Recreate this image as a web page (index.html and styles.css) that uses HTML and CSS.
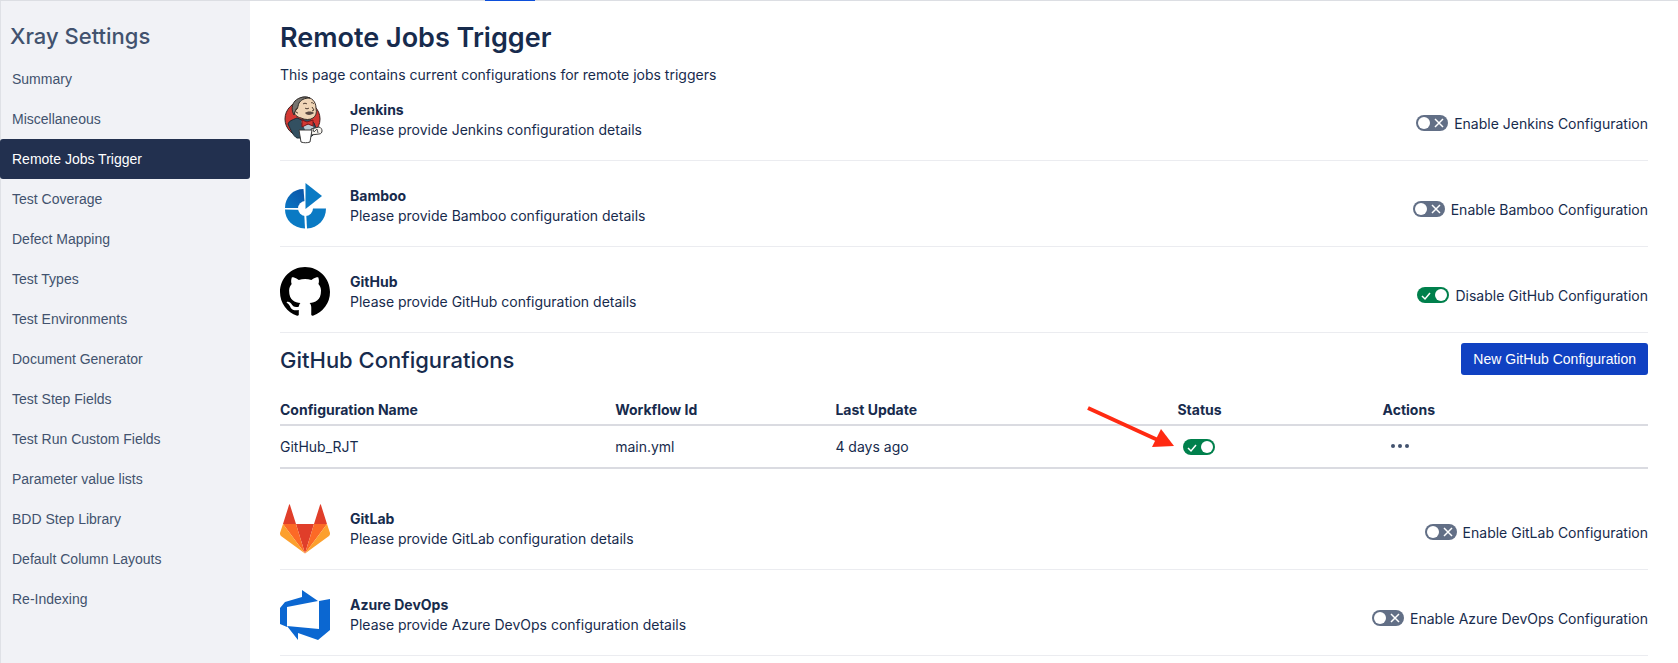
FILE: index.html
```html
<!DOCTYPE html>
<html lang="en">
<head>
  <meta charset="UTF-8">
  <meta name="viewport" content="width=device-width, initial-scale=1">
  <title>Remote Jobs Trigger - Xray Settings</title>
  <link rel="stylesheet" href="styles.css">
</head>
<body>
  <div class="top-line"><span class="top-tab"></span></div>
  <div class="layout">
    <nav class="sidebar">
      <h2>Xray Settings</h2>
      <a href="#">Summary</a>
      <a href="#">Miscellaneous</a>
      <a href="#" class="active">Remote Jobs Trigger</a>
      <a href="#">Test Coverage</a>
      <a href="#">Defect Mapping</a>
      <a href="#">Test Types</a>
      <a href="#">Test Environments</a>
      <a href="#">Document Generator</a>
      <a href="#">Test Step Fields</a>
      <a href="#">Test Run Custom Fields</a>
      <a href="#">Parameter value lists</a>
      <a href="#">BDD Step Library</a>
      <a href="#">Default Column Layouts</a>
      <a href="#">Re-Indexing</a>
    </nav>

    <main class="content">
      <h1>Remote Jobs Trigger</h1>
      <p class="intro">This page contains current configurations for remote jobs triggers</p>

      <section class="provider first">
        <svg class="logo" viewBox="0 0 50 50">
          <circle cx="22.500" cy="24" r="17.500" fill="#d33833" stroke="#3a2020" stroke-width="1"/>
          <path d="M8 29c1-3 4-4 9-6l5 2 8-1 4 4 3 8-5 5-7 2H17c-4-2-6-8-9-14z" fill="#335061" stroke="#1b2a33" stroke-width="1"/>
          <path d="M14 15c0-8 5-13 11-13 7 0 11 5 11 11 1 5 0 8-3 10-3 2-8 2-12 0-4-1-7-3-7-8z" fill="#f0d6b7" stroke="#3a2f2a" stroke-width="1"/>
          <path d="M14 20c-3-5-2-11 1-14 4-4 10-5 15-3-6 0-9 2-11 5-1 2-1 5-2 6-2 1-2 3-3 6z" fill="#77746f" stroke="#2f2b28" stroke-width="1"/>
          <path d="M17 13c-2 1-2 5 1 5M23 9c1-1 3-1 4 0M31 8c1-1 2 0 3 1M25 13c1 1 3 1 4 0M32 12l2 3-2 1" fill="none" stroke="#4d3b30" stroke-width="1"/>
          <path d="M25 18c2-2 7-2 9 0-2 2-7 3-9 0z" fill="#5b4a43"/>
          <path d="M21 26l6 4 5-3 2 8-8 2z" fill="#b9cad4"/>
          <path d="M22 25l5 2 6-2v6l-5-2-6 3z" fill="#d33833" stroke="#7c1518" stroke-width="1"/>
          <path d="M31 34l8-2c4 1 4 7 0 7l-8 1z" fill="#f6f3ee" stroke="#3a3a3a" stroke-width="1"/>
          <path d="M33 34l1 3 3-3 1 4" fill="none" stroke="#555" stroke-width="1"/>
          <path d="M19 35h13l-2 12c-3 1-6 1-9 0z" fill="#fff" stroke="#3a3a3a" stroke-width="1"/>
        </svg>
        <div class="info">
          <strong>Jenkins</strong>
          <span>Please provide Jenkins configuration details</span>
        </div>
        <label class="switch-label">
          <span class="toggle">
            <input type="checkbox">
            <svg viewBox="0 0 32 16"><path d="M19 4l8 8M27 4l-8 8"/></svg>
          </span>
          Enable Jenkins Configuration
        </label>
      </section>

      <section class="provider">
        <svg class="logo" viewBox="0 0 50 50">
          <defs>
            <linearGradient id="bambooFade" x1="1" y1="0" x2="0" y2="1">
              <stop offset="0" stop-color="#0b52a5"/>
              <stop offset="1" stop-color="#0a76c4"/>
            </linearGradient>
          </defs>
          <path d="M23.500 8l1.500 19L5 27C5 16 13 8 23.500 8z" fill="url(#bambooFade)"/>
          <path d="M5 28.500l19 .5 1 18.500C13 47 5 39 5 28.500z" fill="#0a7ac4"/>
          <path d="M26 28.500V27.500H46c0 11-8 19.500-19 20z" fill="#0a7ac4"/>
          <circle cx="25.500" cy="27.500" r="7.500" fill="#fff"/>
          <path d="M25.500 2L42 15 25.500 28z" fill="#0a7ac4"/>
        </svg>
        <div class="info">
          <strong>Bamboo</strong>
          <span>Please provide Bamboo configuration details</span>
        </div>
        <label class="switch-label">
          <span class="toggle">
            <input type="checkbox">
            <svg viewBox="0 0 32 16"><path d="M19 4l8 8M27 4l-8 8"/></svg>
          </span>
          Enable Bamboo Configuration
        </label>
      </section>

      <section class="provider">
        <svg class="logo" viewBox="0 0 16 16">
          <path fill-rule="evenodd" d="M8 0C3.580 0 0 3.580 0 8c0 3.540 2.290 6.530 5.470 7.590.4.070.55-.17.55-.38 0-.19-.01-.82-.01-1.490-2.010.37-2.530-.49-2.690-.94-.09-.23-.48-.94-.82-1.130-.28-.15-.68-.52-.01-.53.63-.01 1.080.58 1.230.82.72 1.210 1.870.87 2.330.66.07-.52.28-.87.51-1.070-1.780-.2-3.640-.89-3.640-3.950 0-.87.31-1.590.82-2.150-.08-.2-.36-1.020.08-2.120 0 0 .67-.21 2.200.82.64-.18 1.320-.27 2-.27s1.360.09 2 .27c1.530-1.040 2.200-.82 2.200-.82.44 1.100.16 1.920.08 2.120.51.56.82 1.270.82 2.150 0 3.070-1.870 3.750-3.650 3.950.29.25.54.73.54 1.480 0 1.070-.01 1.930-.01 2.200 0 .21.15.46.55.38A8.010 8.010 0 0 0 16 8c0-4.420-3.580-8-8-8z"/>
        </svg>
        <div class="info">
          <strong>GitHub</strong>
          <span>Please provide GitHub configuration details</span>
        </div>
        <label class="switch-label">
          <span class="toggle">
            <input type="checkbox" checked>
            <svg viewBox="0 0 32 16"><path d="M5 9l3 3 5-6"/></svg>
          </span>
          Disable GitHub Configuration
        </label>
      </section>

      <section class="configs">
        <div class="configs-head">
          <h2>GitHub Configurations</h2>
          <button type="button" class="primary">New GitHub Configuration</button>
        </div>
        <table>
          <thead>
            <tr>
              <th class="col-name">Configuration Name</th>
              <th class="col-workflow">Workflow Id</th>
              <th class="col-update">Last Update</th>
              <th class="col-status">Status</th>
              <th>Actions</th>
            </tr>
          </thead>
          <tbody>
            <tr>
              <td>GitHub_RJT</td>
              <td>main.yml</td>
              <td>4 days ago</td>
              <td>
                <div class="status">
                  <span class="toggle">
                    <input type="checkbox" aria-label="Status" checked>
                    <svg viewBox="0 0 32 16"><path d="M5 9l3 3 5-6"/></svg>
                  </span>
                  <svg class="arrow" viewBox="0 0 88 44">
                    <path d="M1 3l72 33" stroke="#ff2a12" stroke-width="4"/>
                    <path d="M74 24l13 17-22 1z" fill="#ff2a12"/>
                  </svg>
                </div>
              </td>
              <td>
                <button type="button" class="more" aria-label="More actions">
                  <svg viewBox="0 0 18 4"><circle cx="2" cy="2" r="2"/><circle cx="9" cy="2" r="2"/><circle cx="16" cy="2" r="2"/></svg>
                </button>
              </td>
            </tr>
          </tbody>
        </table>
      </section>

      <section class="provider">
        <svg class="logo" viewBox="0 0 50 50">
          <path d="M25 49.500L16 20h18z" fill="#e03e2a"/>
          <path d="M25 49.500L3 20h13zM25 49.500L47 20H34z" fill="#fc6a26"/>
          <path d="M25 49.500L3 20 0 29c0 1 0 2 1 3zM25 49.500L47 20l3 9c0 1 0 2-1 3z" fill="#fca02e"/>
          <path d="M3 20h13L10 1c0-1-1-1-1 0zM47 20H34l6-19c0-1 1-1 1 0z" fill="#e03e2a"/>
        </svg>
        <div class="info">
          <strong>GitLab</strong>
          <span>Please provide GitLab configuration details</span>
        </div>
        <label class="switch-label">
          <span class="toggle">
            <input type="checkbox">
            <svg viewBox="0 0 32 16"><path d="M19 4l8 8M27 4l-8 8"/></svg>
          </span>
          Enable GitLab Configuration
        </label>
      </section>

      <section class="provider">
        <svg class="logo" viewBox="0 0 50 50">
          <path d="M0 18l5-6 17-5V0l16 11L7 17v20l-7-3zM39 11l11-2v31l-12 10-20-7v7L7 36l32 3z" fill="#0b67d1"/>
        </svg>
        <div class="info">
          <strong>Azure DevOps</strong>
          <span>Please provide Azure DevOps configuration details</span>
        </div>
        <label class="switch-label">
          <span class="toggle">
            <input type="checkbox">
            <svg viewBox="0 0 32 16"><path d="M19 4l8 8M27 4l-8 8"/></svg>
          </span>
          Enable Azure DevOps Configuration
        </label>
      </section>
    </main>
  </div>
</body>
</html>
```

FILE: styles.css
```css
* {
  box-sizing: border-box;
}
body {
  margin: 0;
  min-height: 100vh;
  display: flex;
  flex-direction: column;
  font-family: Inter, "Liberation Sans", sans-serif;
  font-size: 14px;
  line-height: 20px;
  color: #172b4d;
  background: #fff;
}
h1, h2, p {
  margin: 0;
}
.top-line {
  height: 1px;
  padding-left: 485px;
  background: #dcdee3;
}
.top-tab {
  display: block;
  width: 50px;
  height: 1px;
  background: #0c4fdb;
}
.layout {
  flex: 1;
  display: flex;
}

/* sidebar */
.sidebar {
  flex: none;
  width: 250px;
  padding-top: 20px;
  background: #f1f2f6;
  box-shadow: inset 1px 0 #dfe1e6;
  font-family: "Liberation Sans", Arial, sans-serif;
}
.sidebar h2 {
  padding: 0 10px 8px;
  font-family: Inter, sans-serif;
  font-size: 22px;
  font-weight: 500;
  line-height: 30px;
  color: #42526e;
}
.sidebar a {
  display: block;
  padding: 10px 12px;
  border-radius: 3px;
  color: #42526e;
  text-decoration: none;
}
.sidebar a.active {
  background: #22304f;
  color: #fff;
}

/* content */
.content {
  flex: 1;
  padding: 20px 30px 0;
}
h1 {
  font-size: 27px;
  font-weight: 600;
  line-height: 34px;
}
.intro {
  margin-top: 10px;
}
.provider {
  display: flex;
  align-items: center;
  margin-top: 20px;
  padding-bottom: 15px;
  border-bottom: 1px solid #ebecf0;
}
.provider.first {
  margin-top: 10px;
}
.logo {
  width: 50px;
  height: 50px;
  margin-right: 20px;
}
.info {
  flex: 1;
  display: flex;
  flex-direction: column;
}
.info strong {
  font-weight: 700;
}
.switch-label {
  display: flex;
  align-items: center;
  gap: 6px;
  margin-top: 8px;
}
.switch-label .toggle {
  margin-bottom: 2px;
}

/* toggle */
.toggle {
  position: relative;
  display: block;
  width: 32px;
  height: 16px;
}
.toggle input {
  appearance: none;
  display: block;
  width: 32px;
  height: 16px;
  margin: 0;
  padding: 2px;
  border-radius: 8px;
  background: #626f86;
  cursor: pointer;
}
.toggle input::before {
  content: "";
  display: block;
  width: 12px;
  height: 12px;
  border-radius: 50%;
  background: #fff;
}
.toggle input:checked {
  background: #00804c;
}
.toggle input:checked::before {
  margin-left: auto;
}
.toggle svg {
  position: absolute;
  inset: 0;
  fill: none;
  stroke: #fff;
  stroke-width: 1.5;
  pointer-events: none;
}

/* configurations table */
.configs {
  padding-top: 10px;
}
.configs-head {
  display: flex;
  justify-content: space-between;
  align-items: center;
}
.configs-head h2 {
  padding-top: 2px;
  font-size: 22px;
  font-weight: 500;
  line-height: 28px;
}
.primary {
  height: 32px;
  padding: 0 12px;
  border: none;
  border-radius: 3px;
  background: #1041c2;
  color: #fff;
  font: 14px "Liberation Sans", Arial, sans-serif;
  cursor: pointer;
}
table {
  width: 100%;
  margin-top: 18px;
  border-collapse: collapse;
  table-layout: fixed;
}
th, td {
  padding: 0;
  text-align: left;
  border-bottom: 2px solid #dadbe1;
}
th {
  height: 32px;
  padding-top: 2px;
  font-weight: 700;
}
td {
  height: 43px;
}
.col-name {
  width: 24.5%;
}
.col-workflow {
  width: 16.1%;
}
.col-update {
  width: 25%;
}
.col-status {
  width: 15%;
}
.status {
  position: relative;
  padding-left: 6px;
}
.arrow {
  position: absolute;
  right: 100%;
  bottom: 6px;
  width: 88px;
  height: 44px;
  margin-right: 2px;
}
.more {
  display: flex;
  padding: 7px 8px 9px;
  border: none;
  background: none;
  cursor: pointer;
}
.more svg {
  width: 18px;
  height: 4px;
  fill: #42526e;
}
.configs + .provider {
  margin-top: 35px;
}
```
